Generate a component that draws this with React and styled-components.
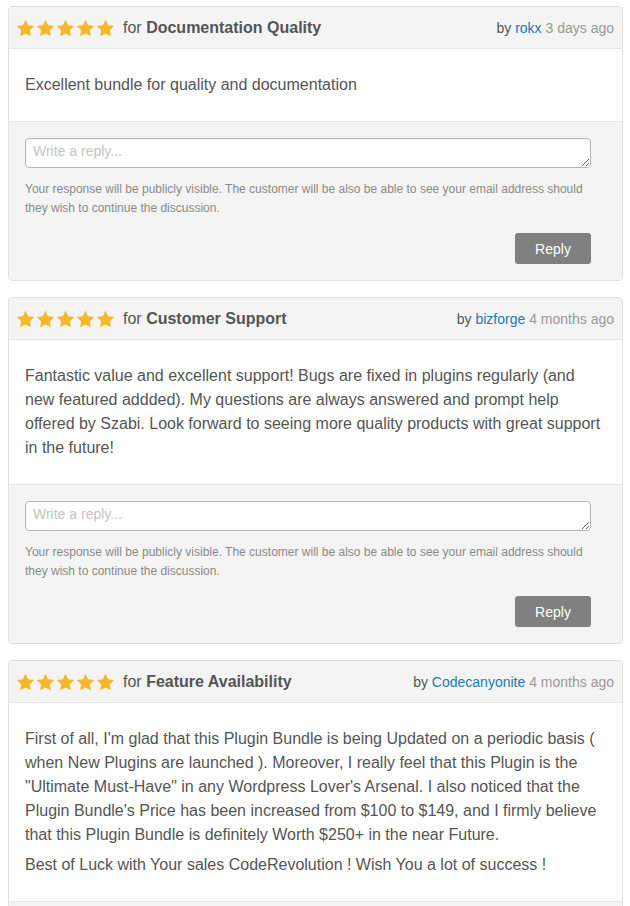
import React from 'react';
import styled, { createGlobalStyle } from 'styled-components';

const GlobalStyle = createGlobalStyle`
  body {
    margin: 0;
    background: #ffffff;
    font-family: 'Liberation Sans', Arial, sans-serif;
  }
`;

const reviews = [
  {
    category: 'Documentation Quality',
    author: 'rokx',
    when: '3 days ago',
    paragraphs: ['Excellent bundle for quality and documentation'],
  },
  {
    category: 'Customer Support',
    author: 'bizforge',
    when: '4 months ago',
    paragraphs: [
      'Fantastic value and excellent support! Bugs are fixed in plugins regularly (and new featured addded). My questions are always answered and prompt help offered by Szabi. Look forward to seeing more quality products with great support in the future!',
    ],
  },
  {
    category: 'Feature Availability',
    author: 'Codecanyonite',
    when: '4 months ago',
    paragraphs: [
      'First of all, I\'m glad that this Plugin Bundle is being Updated on a periodic basis ( when New Plugins are launched ). Moreover, I really feel that this Plugin is the "Ultimate Must-Have" in any Wordpress Lover\'s Arsenal. I also noticed that the Plugin Bundle\'s Price has been increased from $100 to $149, and I firmly believe that this Plugin Bundle is definitely Worth $250+ in the near Future.',
      'Best of Luck with Your sales CodeRevolution ! Wish You a lot of success !',
    ],
  },
];

const Star = () => (
  <svg width="19" height="18" viewBox="0 0 24 23">
    <path
      d="M12 0.8l3.4 7.2 7.8 1-5.7 5.4 1.4 7.8L12 18.4l-6.9 3.8 1.4-7.8L0.8 9l7.8-1z"
      fill="#f4b82a"
    />
  </svg>
);

const ReviewCard = ({ review }) => (
  <Card>
    <Header>
      <Rating>
        <Stars>
          {[0, 1, 2, 3, 4].map((i) => (
            <Star key={i} />
          ))}
        </Stars>
        <For>
          for <Category>{review.category}</Category>
        </For>
      </Rating>
      <Meta>
        by <Author href="#">{review.author}</Author> <When>{review.when}</When>
      </Meta>
    </Header>
    <Body>
      {review.paragraphs.map((p, i) => (
        <Paragraph key={i}>{p}</Paragraph>
      ))}
    </Body>
    <ReplyForm>
      <ReplyInput placeholder="Write a reply..." rows={1} />
      <Note>
        Your response will be publicly visible. The customer will be also be able to see your
        email address should they wish to continue the discussion.
      </Note>
      <Actions>
        <ReplyButton>Reply</ReplyButton>
      </Actions>
    </ReplyForm>
  </Card>
);

const App = () => (
  <>
    <GlobalStyle />
    <Page>
      {reviews.map((r) => (
        <ReviewCard key={r.author} review={r} />
      ))}
    </Page>
  </>
);

export default App;

const Page = styled.div`
  display: flex;
  flex-direction: column;
  gap: 16px;
  padding: 6px 7px 0 8px;
  box-sizing: border-box;
`;

const Card = styled.div`
  border: 1px solid #dfdfdf;
  border-radius: 4px;
  background: #fff;
  overflow: hidden;
`;

const Header = styled.div`
  display: flex;
  align-items: center;
  justify-content: space-between;
  height: 41px;
  padding: 0 8px 0 7px;
  background: #f4f4f4;
  border-bottom: 1px solid #e6e6e6;
  color: #555;
`;

const Rating = styled.div`
  display: flex;
  align-items: center;
  gap: 8px;
`;

const Stars = styled.div`
  display: flex;
  gap: 1px;
  margin-top: 1px;
`;

const For = styled.span`
  font-size: 16px;
`;

const Category = styled.strong`
  font-weight: bold;
`;

const Meta = styled.span`
  font-size: 14px;
  color: #555;
`;

const Author = styled.a`
  color: #1f7ab0;
  text-decoration: none;
`;

const When = styled.span`
  color: #999;
`;

const Body = styled.div`
  padding: 24px 16px 18px;
  border-bottom: 1px solid #e6e6e6;
`;

const Paragraph = styled.p`
  margin: 0 0 6px;
  font-size: 16px;
  line-height: 24px;
  color: #555;
`;

const ReplyForm = styled.div`
  background: #f4f4f4;
  padding: 16px 31px 16px 16px;
`;

const ReplyInput = styled.textarea`
  display: block;
  width: 100%;
  height: 30px;
  box-sizing: border-box;
  border: 1px solid #b5b5b5;
  border-radius: 4px;
  padding: 4px 7px;
  font-family: 'Liberation Sans', Arial, sans-serif;
  font-size: 14px;
  color: #555;
  background: #fff;
  resize: vertical;

  &::placeholder {
    color: #c4c4c4;
  }
`;

const Note = styled.p`
  margin: 12px 0 0;
  font-size: 12px;
  line-height: 19px;
  color: #8a8a8a;
`;

const Actions = styled.div`
  display: flex;
  justify-content: flex-end;
  margin-top: 15px;
`;

const ReplyButton = styled.button`
  width: 76px;
  height: 31px;
  border: none;
  border-radius: 3px;
  background: #808080;
  color: #fff;
  font-family: 'Liberation Sans', Arial, sans-serif;
  font-size: 14px;
  cursor: pointer;
`;
